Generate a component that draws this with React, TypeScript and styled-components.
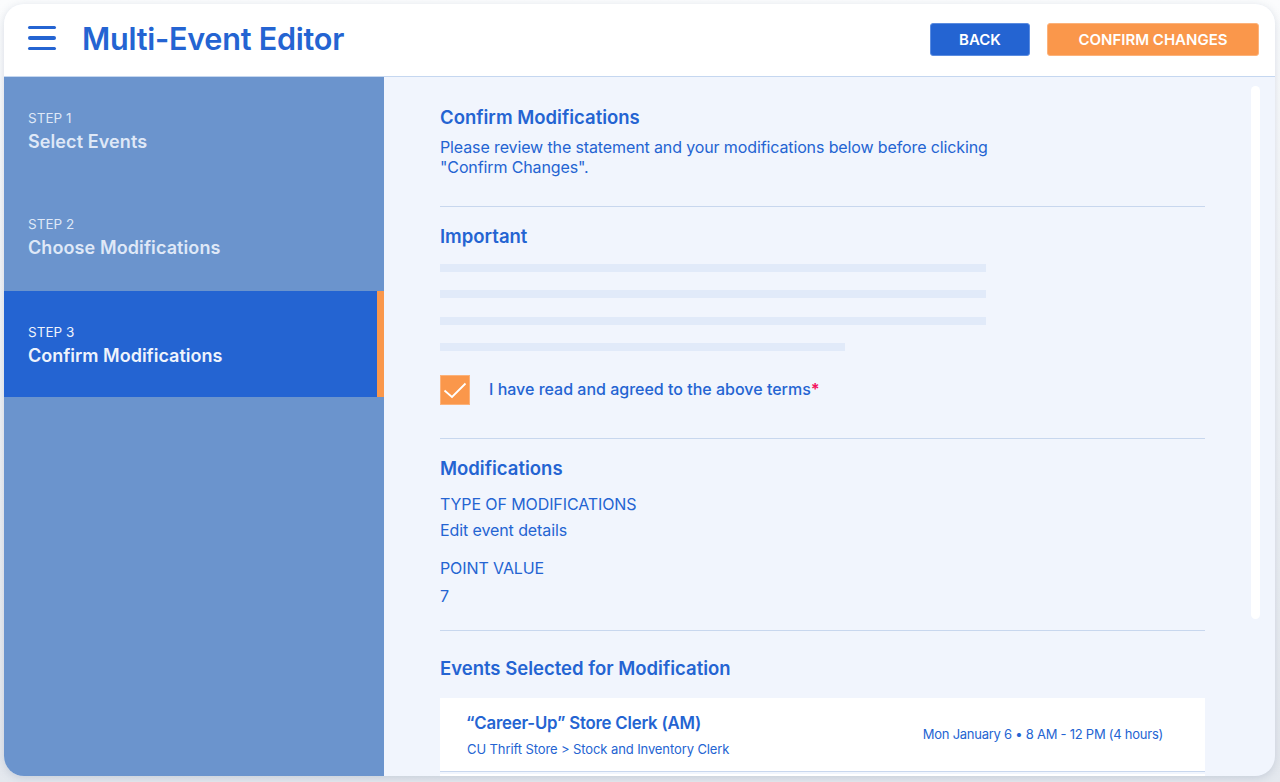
import styled, { createGlobalStyle } from "styled-components";

const blue = "#2464d2";
const orange = "#fa974b";

const GlobalStyle = createGlobalStyle`
  html, body {
    margin: 0;
    height: 100%;
    overflow: hidden;
    background: linear-gradient(180deg, #fbfcfd 0%, #e4e8ee 100%);
    font-family: Inter, "Open Sans", sans-serif;
    color: ${blue};
  }
  * { box-sizing: border-box; }
`;

const Page = styled.div`
  height: 782px;
  padding: 4px 5px 6px 4px;
`;

const Frame = styled.div`
  height: 772px;
  display: flex;
  flex-direction: column;
  background: #f1f5fd;
  border-radius: 20px;
  overflow: hidden;
  box-shadow: 0 2px 8px rgba(90, 110, 140, 0.22);
`;

const Header = styled.header`
  flex: none;
  height: 73px;
  display: flex;
  align-items: center;
  padding: 0 16px 2px 24px;
  background: #fff;
  border-bottom: 1px solid #c5d7f0;
`;

const MenuButton = styled.div`
  width: 28px;
  display: flex;
  flex-direction: column;
  gap: 7px;
  margin: 0 26px 2px 0;
`;

const MenuLine = styled.span`
  height: 3.5px;
  border-radius: 2px;
  background: ${blue};
`;

const Title = styled.h1`
  margin: 0 0 2px;
  flex: 1;
  font-size: 30.6px;
  font-weight: 600;
  letter-spacing: -0.25px;
`;

const Button = styled.button<{ $tone: string; $width: number }>`
  width: ${(p) => p.$width}px;
  height: 33px;
  margin-left: 17px;
  border: 1px solid ${(p) => (p.$tone === "orange" ? "#fcb27a" : "#5b8ce0")};
  border-radius: 3px;
  background: ${(p) => (p.$tone === "orange" ? orange : blue)};
  color: #fff;
  font-family: inherit;
  font-size: 15px;
  font-weight: 600;
`;

const Body = styled.div`
  flex: 1;
  min-height: 0;
  display: flex;
`;

const Sidebar = styled.nav`
  flex: none;
  width: 380px;
  background: #6b94cd;
`;

const Step = styled.div<{ $active?: boolean; $height: number; $nudge: number }>`
  height: ${(p) => p.$height}px;
  display: flex;
  flex-direction: column;
  justify-content: center;
  padding: ${(p) => p.$nudge}px 0 0 24px;
  background: ${(p) => (p.$active ? blue : "transparent")};
  border-right: ${(p) => (p.$active ? `7px solid ${orange}` : "none")};
  color: ${(p) => (p.$active ? "#eef3fc" : "#dfe8f7")};
`;

const StepLabel = styled.span`
  font-size: 13.5px;
  line-height: 18px;
  margin-bottom: 3px;
`;

const StepName = styled.span<{ $active?: boolean }>`
  font-size: 18px;
  line-height: 24px;
  font-weight: 600;
  letter-spacing: ${(p) => (p.$active ? 0 : 0.1)}px;
`;

const Main = styled.main`
  flex: 1;
  min-width: 0;
  display: flex;
  overflow: hidden;
`;

const Content = styled.div`
  width: 821px;
  flex: none;
  padding: 28px 0 0 56px;
`;

const Rail = styled.div`
  flex: none;
  width: 9px;
  height: 533px;
  margin: 9px 0 0 46px;
  border-radius: 5px;
  background: #fff;
`;

const Heading = styled.h2<{ $mt?: number }>`
  margin: ${(p) => p.$mt ?? 0}px 0 0;
  font-size: 18.5px;
  line-height: 24px;
  font-weight: 600;
`;

const Paragraph = styled.p`
  margin: 8px 0 0;
  width: 560px;
  font-size: 16px;
  line-height: 20px;
  letter-spacing: -0.12px;
`;

const Divider = styled.hr<{ $mt: number }>`
  margin: ${(p) => p.$mt}px 0 0;
  border: 0;
  height: 1px;
  background: #c8d7ee;
`;

const Placeholder = styled.div<{ $width: number; $mt: number }>`
  width: ${(p) => p.$width}px;
  height: 8px;
  margin-top: ${(p) => p.$mt}px;
  background: #e1eaf9;
`;

const CheckRow = styled.label`
  display: flex;
  align-items: center;
  margin-top: 24px;
  font-size: 16px;
  font-weight: 500;
`;

const CheckBox = styled.span`
  flex: none;
  width: 30px;
  height: 30px;
  margin-right: 19px;
  display: flex;
  align-items: center;
  justify-content: center;
  background: ${orange};
  border: 1px solid #fcb27a;
`;

const CheckText = styled.span`
  margin-bottom: 2px;
`;

const Required = styled.span`
  color: #f5135f;
  font-size: 16px;
  font-weight: 700;
`;

const FieldText = styled.div<{ $mt: number }>`
  margin-top: ${(p) => p.$mt}px;
  font-size: 16px;
  line-height: 22px;
  letter-spacing: -0.1px;
`;

const EventCard = styled.div`
  height: 74px;
  margin-top: 18px;
  display: flex;
  align-items: center;
  justify-content: space-between;
  padding: 0 42px 0 26px;
  background: #fff;
  border-bottom: 1px solid #c8d7ee;
`;

const EventInfo = styled.div`
  display: flex;
  flex-direction: column;
`;

const EventName = styled.span`
  font-size: 16.8px;
  line-height: 22px;
  font-weight: 600;
  letter-spacing: -0.2px;
`;

const EventPlace = styled.span`
  margin: 6px 0 0 1px;
  font-size: 13px;
  line-height: 18px;
  letter-spacing: -0.1px;
`;

const EventTime = styled.span`
  margin-bottom: 2px;
  font-size: 13px;
  letter-spacing: -0.25px;
`;

const EventCardNext = styled.div`
  height: 20px;
  margin-top: 2px;
  background: #fff;
`;

const steps = [
  { label: "STEP 1", name: "Select Events", height: 107, nudge: 2 },
  { label: "STEP 2", name: "Choose Modifications", height: 107, nudge: 0 },
  { label: "STEP 3", name: "Confirm Modifications", height: 106, nudge: 2, active: true },
];

export default function App() {
  return (
    <Page>
      <GlobalStyle />
      <Frame>
        <Header>
          <MenuButton>
            <MenuLine />
            <MenuLine />
            <MenuLine />
          </MenuButton>
          <Title>Multi-Event Editor</Title>
          <Button $tone="blue" $width={100}>BACK</Button>
          <Button $tone="orange" $width={212}>CONFIRM CHANGES</Button>
        </Header>
        <Body>
          <Sidebar>
            {steps.map((s) => (
              <Step key={s.label} $active={s.active} $height={s.height} $nudge={s.nudge}>
                <StepLabel>{s.label}</StepLabel>
                <StepName $active={s.active}>{s.name}</StepName>
              </Step>
            ))}
          </Sidebar>
          <Main>
            <Content>
              <Heading>Confirm Modifications</Heading>
              <Paragraph>
                Please review the statement and your modifications below before clicking "Confirm Changes".
              </Paragraph>
              <Divider $mt={29} />
              <Heading $mt={17}>Important</Heading>
              <Placeholder $width={546} $mt={16} />
              <Placeholder $width={546} $mt={18} />
              <Placeholder $width={546} $mt={19} />
              <Placeholder $width={405} $mt={18} />
              <CheckRow>
                <CheckBox>
                  <svg width="24" height="18" viewBox="0 0 24 18" fill="none">
                    <path d="M1.5 9.5 L9 16 L22.5 2.5" stroke="#fff" strokeWidth="1.8" />
                  </svg>
                </CheckBox>
                <CheckText>
                  I have read and agreed to the above terms<Required>*</Required>
                </CheckText>
              </CheckRow>
              <Divider $mt={33} />
              <Heading $mt={17}>Modifications</Heading>
              <FieldText $mt={13}>TYPE OF MODIFICATIONS</FieldText>
              <FieldText $mt={4}>Edit event details</FieldText>
              <FieldText $mt={16}>POINT VALUE</FieldText>
              <FieldText $mt={6}>7</FieldText>
              <Divider $mt={23} />
              <Heading $mt={25}>Events Selected for Modification</Heading>
              <EventCard>
                <EventInfo>
                  <EventName>“Career-Up” Store Clerk (AM)</EventName>
                  <EventPlace>CU Thrift Store &gt; Stock and Inventory Clerk</EventPlace>
                </EventInfo>
                <EventTime>Mon January 6 • 8 AM - 12 PM (4 hours)</EventTime>
              </EventCard>
              <EventCardNext />
            </Content>
            <Rail />
          </Main>
        </Body>
      </Frame>
    </Page>
  );
}
